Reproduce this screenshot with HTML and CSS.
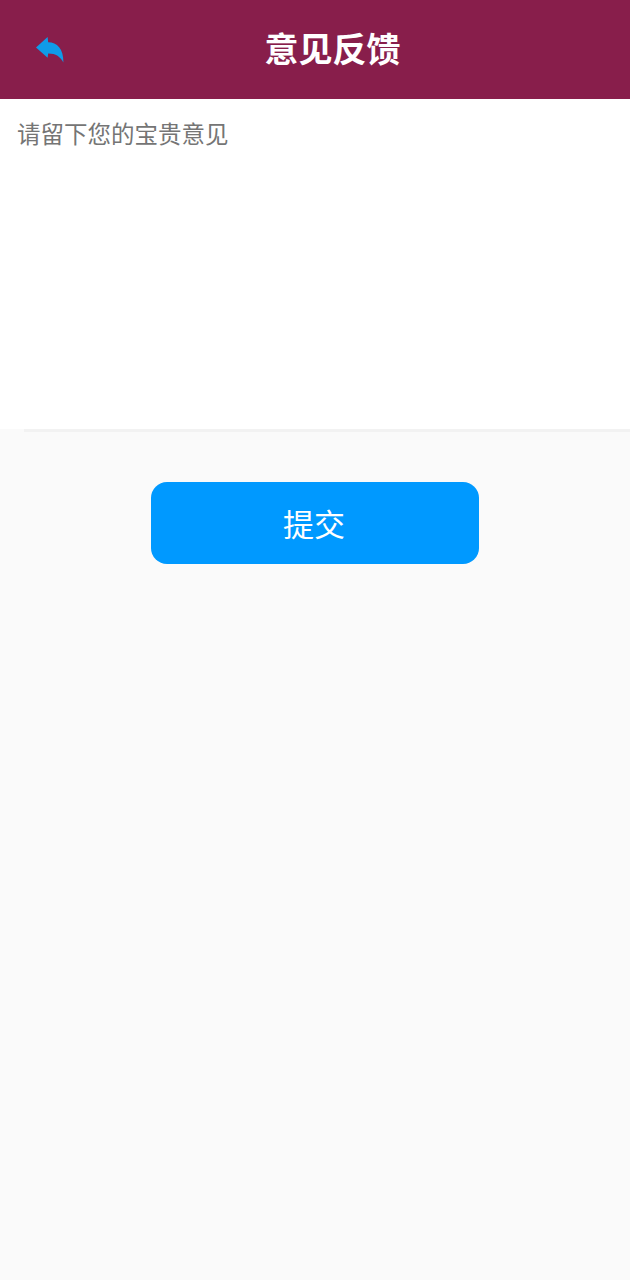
FILE: index.html
```html
<!DOCTYPE html>
<html lang="zh-CN">
<head>
    <meta charset="UTF-8">
    <meta name="viewport" content="width=device-width, initial-scale=1.0">
    <title>意见反馈</title>
    <link rel="stylesheet" href="styles.css">
</head>
<body>

    <!-- 顶部标题栏 -->
    <header class="title-bar">
        <button class="back-btn" aria-label="返回">
            <svg class="back-icon" viewBox="0 0 30 30">
                <path d="M1 12.5 L12.6 2 L13.2 7.2 C22 7.4 28.6 13.5 28.4 27.5 C25.5 21.5 20.5 18.3 13.2 18.4 L12.6 22.8 Z"/>
            </svg>
        </button>
        <h1 class="page-title">意见反馈</h1>
    </header>

    <!-- 输入区域 -->
    <div class="input-panel">
        <textarea class="feedback-input" placeholder="请留下您的宝贵意见"></textarea>
    </div>
    <div class="input-line"></div>

    <button class="submit-btn">提交</button>

</body>
</html>
```

FILE: styles.css
```css
* {
    box-sizing: border-box;
}

body {
    margin: 0;
    min-height: 1280px;
    background-color: #fafafa;
    font-family: "Noto Sans CJK SC", "Liberation Sans", sans-serif;
}

/* 标题栏 */
.title-bar {
    display: flex;
    align-items: center;
    height: 99px;
    padding-left: 35px;
    background-color: #881e4b;
}

.back-btn {
    display: flex;
    padding: 0;
    border: none;
    background: none;
}

.back-icon {
    width: 30px;
    height: 30px;
    fill: #0f9be8;
}

.page-title {
    margin: 0 0 4px 199.5px;
    color: #fff;
    font-size: 34px;
    font-weight: 700;
    line-height: 1;
}

/* 输入区域 */
.input-panel {
    height: 330px;
    padding: 18px 17px 0;
    background-color: #fff;
}

.feedback-input {
    display: block;
    width: 100%;
    height: 290px;
    padding: 0;
    border: none;
    outline: none;
    resize: none;
    background: none;
    font-family: inherit;
    font-size: 23.5px;
    line-height: 32px;
}

.feedback-input::placeholder {
    color: #757575;
    opacity: 1;
}

.input-line {
    height: 3px;
    margin-left: 24px;
    background-color: #f2f2f2;
}

/* 提交按钮 */
.submit-btn {
    display: block;
    width: 328px;
    height: 82px;
    margin: 50px 0 0 151px;
    padding: 0 2px 1px 0;
    border: none;
    border-radius: 16px;
    background-color: #0099ff;
    color: #fff;
    font-family: inherit;
    font-size: 31px;
}
```
